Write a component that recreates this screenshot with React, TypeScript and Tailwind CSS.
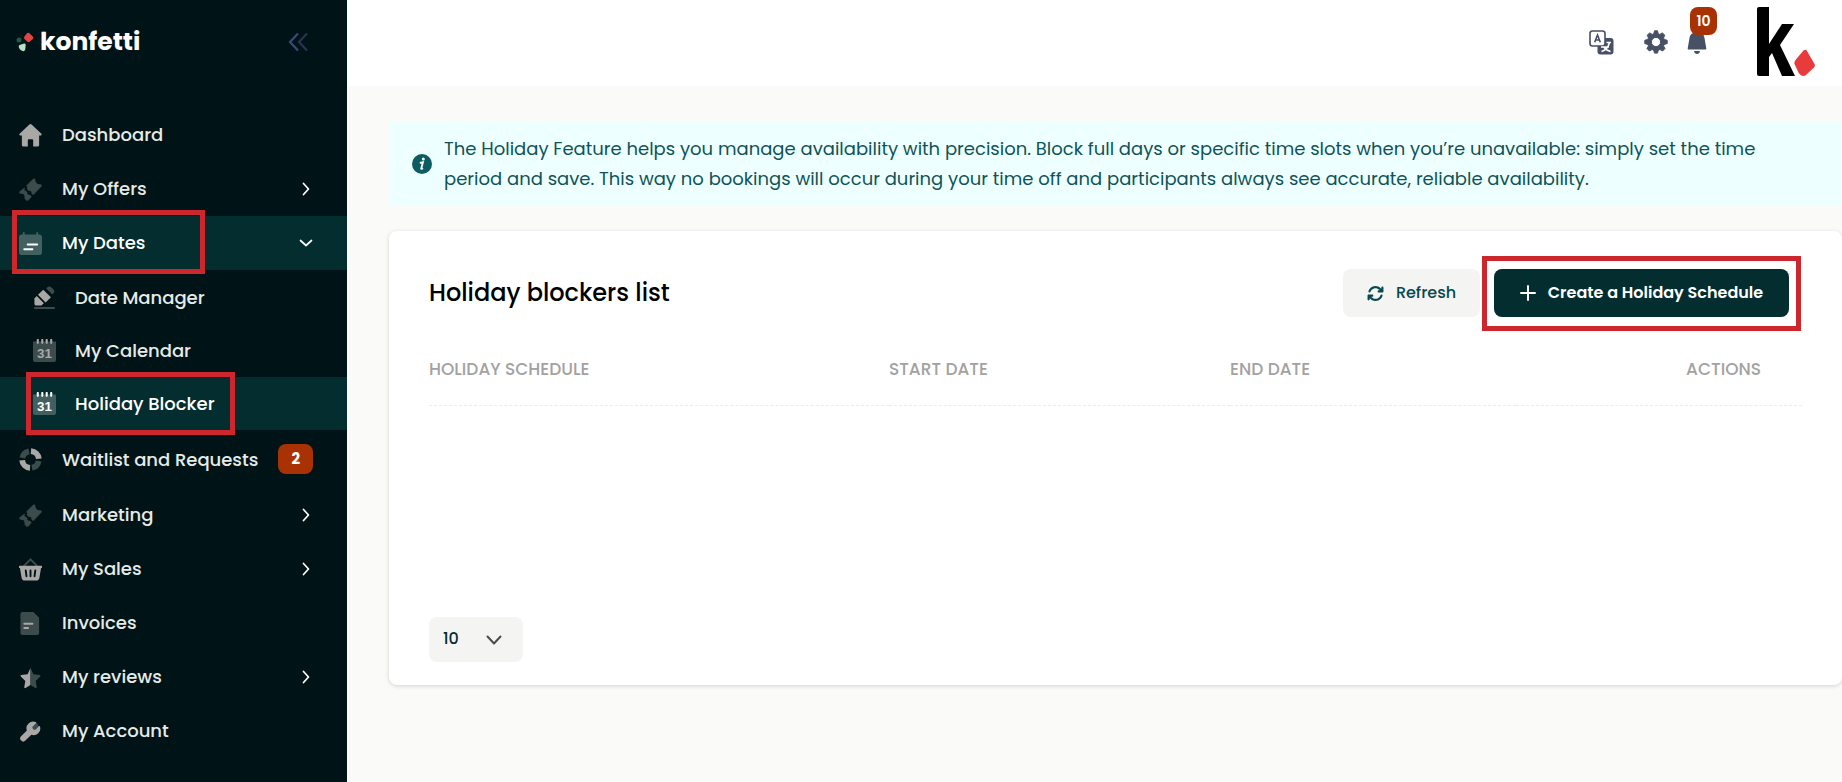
import type { ReactNode } from "react";
import { FaArrowsRotate } from "react-icons/fa6";

const DIM = "#3c4b4b";
const LIT = "#a9a8a7";

function Svg({ children, className = "size-[23px]", box = "0 0 24 24" }: { children: ReactNode; className?: string; box?: string }) {
  return (
    <svg viewBox={box} className={className + " shrink-0"} fill="none" aria-hidden="true">
      {children}
    </svg>
  );
}

const HomeIcon = () => (
  <Svg>
    <path d="M10.600.8a2 2 0 0 1 2.800 0l9.700 9c1 1 .5 2.200-.8 2.200H21v10a1.600 1.600 0 0 1-1.600 1.600h-4.600V17a1 1 0 0 0-1-1h-3.600a1 1 0 0 0-1 1v6.600H4.600A1.600 1.600 0 0 1 3 22V12H1.700c-1.300 0-1.800-1.200-.8-2.200z" fill={LIT} />
  </Svg>
);

const TicketIcon = () => (
  <Svg>
    <g fill={DIM} stroke={DIM} strokeWidth="1.200" strokeLinejoin="round">
      <path d="M8.300 8 15.300 1.300l1-.2q.2 3.400 1.700 4.700 1.500 1.400 5 1.600v1L14.800 17l-1.500-1.500.6-.8-2.400-2.400-.9.700-1.800-1.800.7-.9z" />
      <path d="M5.600 10.900 1 14.600v1q3.300.2 4.500 1.300 1.200 1.200.9 4.300l1.800 2 1-.2 3.300-3.600-1.500-1.500-.8.700-2.600-2.600.6-.8-1.700-1.700-.7.500-1-1.900z" />
    </g>
  </Svg>
);

const DatesIcon = () => (
  <Svg>
    <path d="M5 0q1 0 1 1v1.500h12V1q0-1 1-1t1 1v1.500h1A3 3 0 0 1 24 5.500V21a3 3 0 0 1-3 3H3a3 3 0 0 1-3-3V5.500a3 3 0 0 1 3-3h1V1q0-1 1-1z" fill="#41605f" />
    <path d="M9 13h10M5.500 18h8.500" stroke="#fff" strokeWidth="2" strokeLinecap="round" />
  </Svg>
);

const PencilIcon = () => (
  <Svg>
    <path d="m13.800 2.500 1.500-1.400q2-1.600 4.200.6l1.500 1.500q2 2.200.6 4.200l-1.400 1.500z" fill={DIM} />
    <path d="m10.700 3.800 8 8-5.500 5.300-8-8z" fill={LIT} />
    <path d="m3.900 10.500 7.400 7.400-2.500 2.400H3q-1.500 0-1.500-1.500v-5.800z" fill={LIT} />
    <path d="M2 23h20" stroke={DIM} strokeWidth="2" strokeLinecap="round" />
  </Svg>
);

const CalendarIcon = ({ lit = false }: { lit?: boolean }) => (
  <Svg>
    <path d="M0 2.500h24V22a2 2 0 0 1-2 2H2a2 2 0 0 1-2-2z" fill={lit ? "#41605f" : DIM} />
    <path d="M5 1v3M9.700 1v3M14.300 1v3M19 1v3" stroke={lit ? "#fff" : LIT} strokeWidth="2.200" strokeLinecap="round" />
    <text x="12" y="19.500" textAnchor="middle" fontFamily="Liberation Sans" fontSize="14" fontWeight="700" fill={lit ? "#fff" : LIT}>
      31
    </text>
  </Svg>
);

const LifeRingIcon = () => (
  <Svg>
    <g strokeWidth="6">
      <path d="M3.500 10.500A8.700 8.700 0 0 1 10.500 3.500M20.500 13.500a8.700 8.700 0 0 1-7 7" stroke={DIM} />
      <path d="M12.500 3.300A8.700 8.700 0 0 1 20.700 11.300M11.500 20.700A8.700 8.700 0 0 1 3.300 12.700" stroke={LIT} />
    </g>
  </Svg>
);

const BasketIcon = () => (
  <Svg>
    <path d="M4.500 9 12 1.500 19.500 9" stroke={DIM} strokeWidth="2" strokeLinecap="round" />
    <path d="M1 8h22a1 1 0 0 1 0 2.500l-1.700 10A3.500 3.500 0 0 1 18 23.500H6a3.500 3.500 0 0 1-3.300-3L1 10.500A1 1 0 0 1 1 8z" fill={LIT} />
    <path d="m7 13 .8 6M12 13v6M17 13l-.8 6" stroke="#001418" strokeWidth="2" strokeLinecap="round" />
  </Svg>
);

const InvoiceIcon = () => (
  <Svg>
    <path d="M3.500 0H15l6 6v16a2 2 0 0 1-2 2H3.500a2 2 0 0 1-2-2V2a2 2 0 0 1 2-2z" fill={DIM} />
    <path d="M5.500 12.300H14M5.500 16.700h4" stroke={LIT} strokeWidth="2" strokeLinecap="round" />
  </Svg>
);

const StarIcon = () => (
  <Svg>
    <path d="M12 2.200 9 8.500l-6.600.9c-.8.200-1 .9-.5 1.500l4.700 4.700-1.100 6.400c-.1.900.600 1.300 1.300 1L12 19.800z" fill={LIT} />
    <path d="m12 2.200 3 6.300 6.600.9c.8.200 1 .9.500 1.500l-4.700 4.700 1.100 6.400c.1.900-.6 1.300-1.300 1L12 19.800z" fill={DIM} />
  </Svg>
);

const WrenchIcon = () => (
  <Svg>
    <circle cx="16" cy="7" r="4.500" fill={DIM} />
    <path d="M17.500 2.200A7 7 0 0 0 8.200 11L2.200 17a3.200 3.200 0 0 0 0 4.500 3.200 3.200 0 0 0 4.500 0l6.200-6a7 7 0 0 0 9-8.700c-.2-.6-.8-.6-1.200-.2l-3.200 3.200q-1.400 1-2.700-.2-1.500-1.400-.4-2.900l3.300-3.200c.5-.5.400-1-.2-1.300z" fill={LIT} />
  </Svg>
);

const Chevron = ({ open = false }: { open?: boolean }) => (
  <Svg className="size-[14px]" box="0 0 14 14">
    <path d={open ? "M1.500 4.500 7 9.500l5.500-5" : "m4.500 1.500 5 5.500-5 5.500"} stroke="#fff" strokeWidth="1.700" strokeLinecap="round" strokeLinejoin="round" />
  </Svg>
);

type Item = { label: string; icon: ReactNode; chevron?: "right" | "down"; badge?: string; sub?: boolean; active?: boolean; outline?: string };

const items: Item[] = [
  { label: "Dashboard", icon: <HomeIcon /> },
  { label: "My Offers", icon: <TicketIcon />, chevron: "right" },
  { label: "My Dates", icon: <DatesIcon />, chevron: "down", active: true, outline: "left-[12px] -top-[6px] w-[193px] h-[64px]" },
  { label: "Date Manager", icon: <PencilIcon />, sub: true },
  { label: "My Calendar", icon: <CalendarIcon />, sub: true },
  { label: "Holiday Blocker", icon: <CalendarIcon lit />, sub: true, active: true, outline: "left-[26px] -top-[5px] w-[209px] h-[63px]" },
  { label: "Waitlist and Requests", icon: <LifeRingIcon />, badge: "2" },
  { label: "Marketing", icon: <TicketIcon />, chevron: "right" },
  { label: "My Sales", icon: <BasketIcon />, chevron: "right" },
  { label: "Invoices", icon: <InvoiceIcon /> },
  { label: "My reviews", icon: <StarIcon />, chevron: "right" },
  { label: "My Account", icon: <WrenchIcon /> },
];

function NavItem({ item }: { item: Item }) {
  const height = item.badge ? "h-[58px]" : item.sub ? "h-[53px]" : item.chevron === "down" ? "mb-px h-[54px]" : "h-[54px]";
  return (
    <li className={"relative " + height + (item.active ? " bg-[#042d30]" : "")}>
      <a href="#" className={"flex h-full items-center pr-[34px] " + (item.sub ? "gap-[19px] pl-[33px]" : "gap-5 pl-[19px]") + (item.active ? " text-white" : " text-[#e6ebe8]")}>
        {item.icon}
        <span className={"grow whitespace-nowrap " + (item.sub || item.badge ? "" : "pb-[2px]")}>{item.label}</span>
        {item.badge && <span className="flex h-[30px] w-[35px] shrink-0 items-center justify-center rounded-lg bg-[#a93205] text-[15px] font-bold text-white">{item.badge}</span>}
        {item.chevron && <Chevron open={item.chevron === "down"} />}
      </a>
      {item.outline && <span className={"pointer-events-none absolute z-10 border-[5px] border-[#cd262d] " + item.outline} />}
    </li>
  );
}

function Sidebar() {
  return (
    <aside className="w-[347px] shrink-0 bg-[#001418] text-[18px] font-medium">
      <div className="flex h-[108px] items-start justify-between pt-[26px] pr-[38px] pl-4">
        <a href="#" aria-label="konfetti" className="flex items-center gap-[6px] text-white">
          <Svg className="h-5 w-[18px]" box="0 0 18 20">
            <circle cx="3" cy="8" r="2.500" fill="#1f5a48" />
            <path d="M11 1.300q1.500-1 2.700.2L17 4.800q.8 1-.2 2.200l-3.200 2.800q-1 .7-2.200 0L8.500 7q-.9-1-.2-2.200z" fill="#e04646" />
            <path d="m3.500 13 4.700-1.500q1.400 0 1.500 1.300l-.4 4.500q-.7 2.300-2.700 1.800-3.600-1.500-3.900-4.500.1-1.100.8-1.600z" fill="#b5e3c5" />
          </Svg>
          <span className="text-[25px] leading-8 font-bold">konfetti</span>
        </a>
        <button type="button" aria-label="Collapse menu" className="pt-[6px]">
          <Svg className="h-5 w-[22px]" box="0 0 22 20">
            <path d="M11 1.500 3 10l8 8.500" stroke="#3b4a75" strokeWidth="2.200" />
            <path d="M20 1.500 12 10l8 8.500" stroke="#28344f" strokeWidth="2.200" />
          </Svg>
        </button>
      </div>
      <nav>
        <ul>
          {items.map((item) => (
            <NavItem key={item.label} item={item} />
          ))}
        </ul>
      </nav>
    </aside>
  );
}

function Header() {
  return (
    <header className="flex h-[86px] items-start justify-end bg-white pr-[26px]">
      <button type="button" aria-label="Language" className="mt-[30px] mr-[30px]">
        <Svg className="size-[25px]" box="0 0 25 25">
          <rect x="8.500" y="8" width="16" height="16.500" rx="3" fill="#475065" />
          <rect x="1" y="1" width="15" height="15" rx="2.500" fill="#fff" stroke="#475065" strokeWidth="1.600" />
          <path d="M5.700 12.300 8.500 5l2.800 7.300M6.700 10h3.600" stroke="#475065" strokeWidth="1.600" />
          <path d="M17.500 12.500h4.500M12 17h8M20.300 13q-1.500 6.500-7.800 8.500M14.500 17q3 3.500 7 4.500" stroke="#fff" strokeWidth="1.600" />
        </Svg>
      </button>
      <button type="button" aria-label="Settings" className="mt-[30px] mr-[19px]">
        <Svg className="size-[24px]" box="0 0 24 24">
          <path fillRule="evenodd" clipRule="evenodd" d="M10.500.8h3l.7 2.900 1.600.7L18.300 2.900l2.500 2.300-1.300 2.700.7 1.500 3 .9v3.300l-3 .8-.7 1.600 1.500 2.600-2.400 2.400-2.600-1.500-1.700.7-.8 2.900h-3l-.8-2.900-1.700-.7L5.400 21 3 18.600 4.500 16l-.7-1.600-3-.8v-3.300l3-.9.7-1.500L3.200 5.200 5.700 2.900l2.500 1.500 1.600-.7zM12 7.400a4.600 4.600 0 1 0 0 9.200 4.600 4.600 0 0 0 0-9.200z" fill="#475065" stroke="#475065" strokeLinejoin="round" />
        </Svg>
      </button>
      <button type="button" aria-label="Notifications" className="relative mt-[30px] mr-[49px]">
        <Svg className="h-6 w-5" box="0 0 20 24">
          <path d="M2.500 8a7.500 6 0 0 1 15 0L19.300 18.500q.2 1-.8 1h-17q-1 0-.8-1z" fill="#475065" />
          <path d="M7 21h6q-.5 3-3 3t-3-3z" fill="#475065" />
        </Svg>
        <span className="absolute -top-[23px] left-[3px] flex h-7 w-[27px] items-center justify-center rounded-lg bg-[#a93205] text-[14px] font-semibold text-white">10</span>
      </button>
      <a href="#" aria-label="Profile" className="mt-[7px]">
        <Svg className="h-[69px] w-[60px]" box="0 0 60 69">
          <path d="M3 0h10v37l13-20h12L24 38l15 31H26L16 46l-3 4v19H3q-2 0-2-2V2q0-2 2-2z" fill="#000" />
          <path d="M47.500 43.500q2-1.500 3.500.5l7.500 13q1 2-.5 3.500l-8 7.500q-2 1.500-4.500.5-2-1-3-3L38.500 57q-.5-2 1-4z" fill="#e83c3c" />
        </Svg>
      </a>
    </header>
  );
}

function InfoBanner() {
  return (
    <div className="flex items-center gap-3 bg-[#edffff] py-3 pr-[70px] pl-[23px]">
      <Svg className="size-5" box="0 0 20 20">
        <circle cx="10" cy="10" r="10" fill="#0b5c63" />
        <circle cx="11.300" cy="5" r="1.500" fill="#fff" />
        <path d="M7.800 8.800 11 8.200 9.200 14.500q-.1 1 1.800-.2" stroke="#fff" strokeWidth="1.800" />
      </Svg>
      <p className="text-[18px] leading-[30px] text-[#0f5357]">
        The Holiday Feature helps you manage availability with precision. Block full days or specific time slots when you’re unavailable: simply set the time period and save. This way no bookings will occur during your time off and participants always see accurate, reliable availability.
      </p>
    </div>
  );
}

function HolidayCard() {
  return (
    <section className="rounded-lg bg-white px-10 pt-[38px] pb-[23px] shadow-[0_1px_4px_rgba(0,0,0,0.16)]">
      <div className="flex items-center justify-between pr-[13px]">
        <h1 className="text-[24px] leading-9 font-medium text-black">Holiday blockers list</h1>
        <div className="flex items-center gap-[14px]">
          <button type="button" className="flex h-12 min-w-[137px] items-center justify-center gap-3 rounded-lg bg-[#f4f4f3] px-5 text-[16px] font-medium text-[#07494d]">
            <FaArrowsRotate className="size-[17px]" aria-hidden="true" />
            Refresh
          </button>
          <div className="relative">
            <button type="button" className="flex h-12 min-w-[295px] items-center justify-center gap-3 rounded-lg bg-[#042d30] px-5 text-[16px] font-semibold whitespace-nowrap text-white">
              <Svg className="size-4" box="0 0 16 16">
                <path d="M8 1v14M1 8h14" stroke="#fff" strokeWidth="2" strokeLinecap="round" />
              </Svg>
              Create a Holiday Schedule
            </button>
            <span className="pointer-events-none absolute -inset-x-3 -top-[13px] -bottom-[14px] border-[5px] border-[#cd262d]" />
          </div>
        </div>
      </div>
      <table className="mt-[18px] w-full table-fixed text-left text-[17px] text-[#a3a2a0]">
        <thead>
          <tr className="h-[70px] border-b border-dashed border-[#ececea]">
            <th className="w-[460px] font-medium">HOLIDAY SCHEDULE</th>
            <th className="w-[341px] font-medium">START DATE</th>
            <th className="font-medium">END DATE</th>
            <th className="pr-[41px] text-right font-medium">ACTIONS</th>
          </tr>
        </thead>
        <tbody />
      </table>
      <div className="relative mt-[211px] w-[94px]">
        <select aria-label="Rows per page" className="h-[45px] w-full appearance-none rounded-lg bg-[#f4f4f3] pl-[14px] text-[16px] font-medium text-[#042d30]">
          <option>10</option>
        </select>
        <Svg className="pointer-events-none absolute top-[15px] right-[21px] size-4" box="0 0 16 16">
          <path d="m1.500 4.500 6.500 7 6.500-7" stroke="#4d4d4d" strokeWidth="2" strokeLinecap="round" strokeLinejoin="round" />
        </Svg>
      </div>
    </section>
  );
}

export default function App() {
  return (
    <div className="flex min-h-screen overflow-x-clip bg-[#fafaf9] font-['Poppins','Inter','Liberation_Sans',sans-serif]">
      <Sidebar />
      <div className="min-w-0 grow">
        <Header />
        <main className="flex flex-col gap-[25px] pt-9 pl-[42px]">
          <InfoBanner />
          <HolidayCard />
        </main>
      </div>
    </div>
  );
}
